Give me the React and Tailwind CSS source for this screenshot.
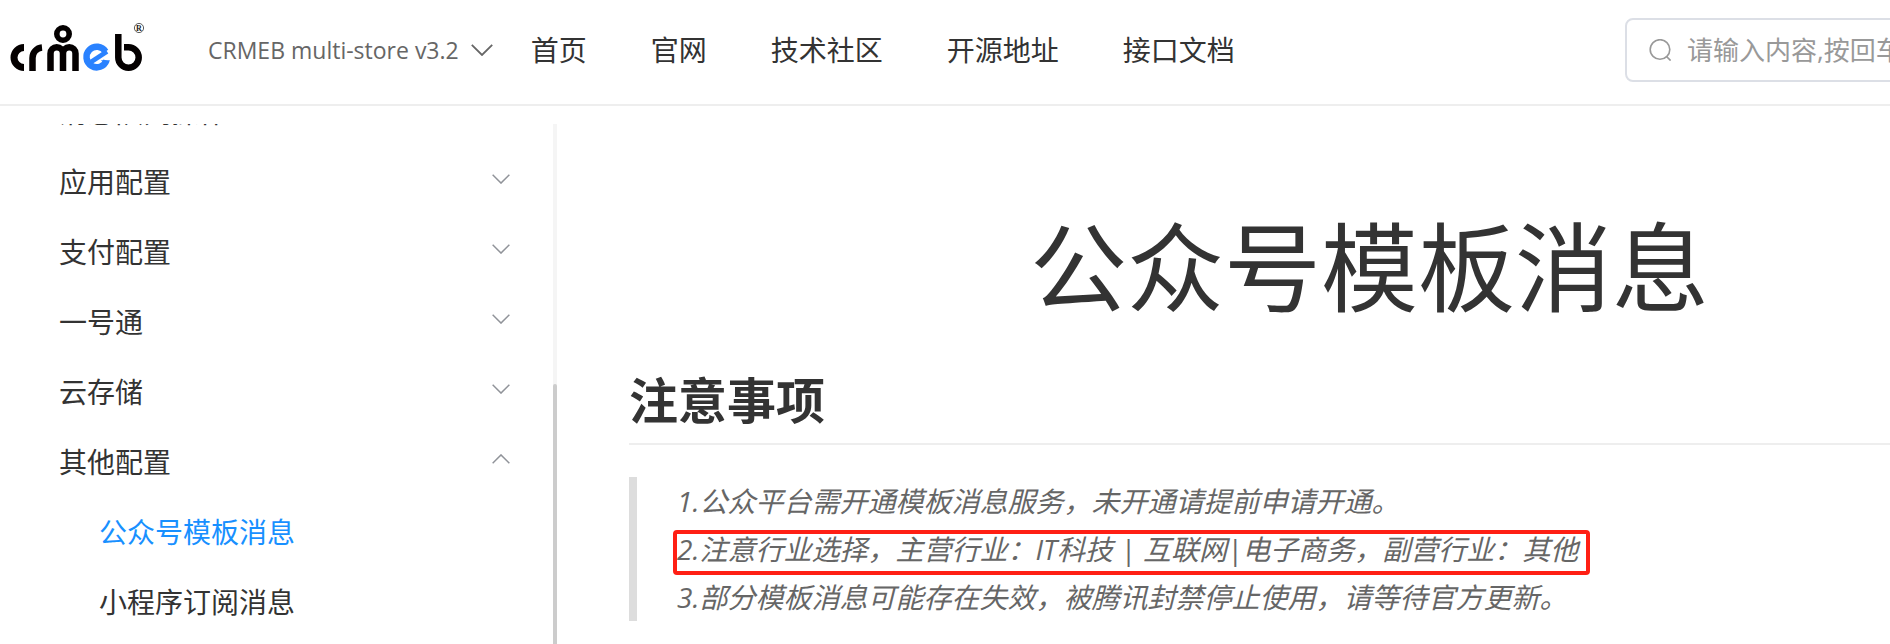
import React from 'react';

const navLinks = ['首页', '官网', '技术社区', '开源地址', '接口文档'];

const menu = [
    { label: '消息队列操作' },
    { label: '应用配置' },
    { label: '支付配置' },
    { label: '一号通' },
    { label: '云存储' },
    {
        label: '其他配置',
        open: true,
        children: [
            { label: '公众号模板消息', active: true },
            { label: '小程序订阅消息' },
        ],
    },
];

const Chevron = ({ className }) => (
    <svg viewBox="0 0 22 12" fill="none" stroke="currentColor" strokeWidth="1.8" className={className} aria-hidden="true">
        <path d="M0.8 0.8 11 11 21.2 0.8" />
    </svg>
);

const SearchIcon = () => (
    <svg viewBox="0 0 22 22" fill="none" stroke="currentColor" strokeWidth="1.6" className="size-[22px] shrink-0 text-[#999]" aria-hidden="true">
        <circle cx="11" cy="10.500" r="9.800" />
        <path d="M17.500 17.500 21.600 21.600" />
    </svg>
);

const Logo = () => (
    <svg viewBox="8 20 136 60" className="h-[60px] w-[136px]" aria-label="crmeb" role="img">
        <g fill="none" stroke="#040000" strokeWidth="6.500">
            <path d="M24 47.500A10 10 0 0 0 24 67.500" strokeWidth="7" />
            <path d="M32.500 71V58A10.500 10.500 0 0 1 42 47.500" />
            <path d="M50.500 71V53.500a6.250 6.250 0 0 1 12.500 0V71M63 53.500a6.250 6.250 0 0 1 12.500 0V71" />
            <circle cx="63" cy="34" r="6.200" strokeWidth="5.600" />
            <path d="M118.300 34V57.500A10.200 10.200 0 1 0 128.500 47.300H124" />
        </g>
        <g fill="none" stroke="#2a82ff">
            <path d="M105.500 51.500A10.300 10.300 0 1 0 106.500 60.500" strokeWidth="6.500" />
            <path d="M91 62 107 51.500" strokeWidth="4.500" />
        </g>
        <path d="M101 60.300H110L106 66Z" fill="#2a82ff" />
        <circle cx="139" cy="28" r="4.600" fill="none" stroke="#333" strokeWidth="0.800" />
        <text x="139" y="30.800" textAnchor="middle" fontSize="8" fontWeight="700" fontFamily="Liberation Serif, serif" fill="#222">R</text>
    </svg>
);

const Header = () => (
    <header className="flex h-[106px] items-center border-b-2 border-[#eee] pb-1 pr-16">
        <a href="#home" className="ml-2">
            <Logo />
        </a>
        <button type="button" className="ml-16 flex items-center gap-3 text-[23px] text-[#666]">
            CRMEB multi-store v3.2
            <Chevron className="h-3 w-[22px]" />
        </button>
        <nav className="ml-[38px] flex gap-16 text-[28px]">
            {navLinks.map((link) => (
                <a key={link} href="#nav">{link}</a>
            ))}
        </nav>
        <label className="ml-auto flex h-16 w-[487px] items-center gap-4 rounded-lg border-2 border-[#dcdfe6] px-[22px]">
            <SearchIcon />
            <input
                type="search"
                aria-label="搜索"
                placeholder="请输入内容,按回车键搜索"
                className="min-w-0 flex-1 text-[26px] outline-none placeholder:text-[#999]"
            />
        </label>
    </header>
);

const Sidebar = () => (
    <aside className="flex w-[557px] shrink-0 pt-[18px]">
        <nav className="flex-1 overflow-hidden text-[28px]">
            <ul className="-mt-[47px]">
                {menu.map((item) => (
                    <li key={item.label}>
                        <button type="button" className="flex h-[70px] w-full items-center justify-between pl-[59px] pr-[43px]">
                            {item.label}
                            <Chevron className={item.open ? 'mb-1.5 h-[10px] w-[18px] rotate-180 text-[#909399]' : 'mb-1.5 h-[10px] w-[18px] text-[#909399]'} />
                        </button>
                        {item.children && (
                            <ul>
                                {item.children.map((child) => (
                                    <li key={child.label}>
                                        <a
                                            href="#doc"
                                            className={child.active ? 'flex h-[70px] items-center pl-[99px] text-[#1890ff]' : 'flex h-[70px] items-center pl-[99px]'}
                                        >
                                            {child.label}
                                        </a>
                                    </li>
                                ))}
                            </ul>
                        )}
                    </li>
                ))}
            </ul>
        </nav>
        {/* scrollbar */}
        <div className="flex w-1 flex-col justify-end bg-[#f5f5f5]">
            <div className="h-1/2 rounded-t-sm bg-[#ccc]" />
        </div>
    </aside>
);

const Article = () => (
    <main className="flex-1 pl-[72px] pr-[66px] pt-27">
        <h1 className="text-center text-[97px] leading-[104px]">公众号模板消息</h1>
        <h2 className="mt-[47px] border-b-2 border-[#eee] pb-2 text-[49px] font-bold leading-[70px]">注意事项</h2>
        <blockquote className="mt-8 border-l-8 border-[#ddd] pl-10 text-[28px] italic leading-[48px] text-[#666]">
            <p>1.公众平台需开通模板消息服务，未开通请提前申请开通。</p>
            <p className="relative w-fit">
                2.注意行业选择，主营行业：IT科技 | 互联网|电子商务，副营行业：其他
                <span className="absolute -bottom-0.5 -left-1 -right-3 top-[5px] rounded-sm border-4 border-[#ff1f14]" />
            </p>
            <p>3.部分模板消息可能存在失效，被腾讯封禁停止使用，请等待官方更新。</p>
        </blockquote>
    </main>
);

export default function App() {
    return (
        <div className="h-screen overflow-hidden bg-white font-['Open_Sans','Noto_Sans_CJK_SC',sans-serif] text-[#333]">
            <div className="flex h-full min-w-[2176px] flex-col">
                <Header />
                <div className="flex min-h-0 flex-1">
                    <Sidebar />
                    <Article />
                </div>
            </div>
        </div>
    );
}
